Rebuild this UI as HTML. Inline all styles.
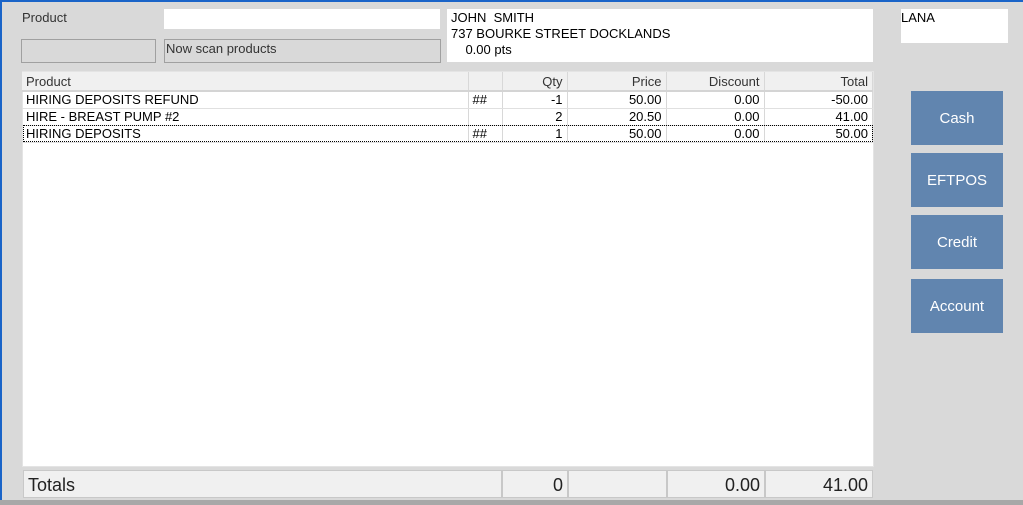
<!DOCTYPE html>
<html><head><style>
*{box-sizing:border-box;margin:0;padding:0}
body{width:1023px;height:505px;background:#d9d9d9;font-family:"Liberation Sans",sans-serif;font-size:13px;color:#000;position:relative;overflow:hidden}
.a{position:absolute}
.topb{left:0;top:0;width:1023px;height:2px;background:#1a64c8}
.leftb{left:0;top:0;width:2px;height:505px;background:#1a64c8}
.bot{left:0;top:500px;width:1023px;height:5px;background:#a8a8a8}
.white{background:#fff}
.gbox{background:#d9d9d9;border:1px solid #a0a0a0}
table{border-collapse:collapse;position:absolute;left:22px;top:72px;width:851px;font-size:13px}
td{height:17px;line-height:15px;padding:0 4px;border-right:1px solid #d8d8d8;border-bottom:1px solid #e0e0e0;text-align:right;white-space:nowrap}
td:first-child{text-align:left}
tr.h td{background:#f0f0f0;color:#333;border-bottom:2px solid #d4d4d4;height:19px}
td.c{text-align:left}
.sel{position:absolute;left:23px;top:125px;width:850px;height:17px;border:1px dotted #000}
.btn{position:absolute;left:911px;width:92px;height:54px;background:#6185af;color:#fff;font-size:15px;display:flex;align-items:center;justify-content:center}
.tot{position:absolute;top:470px;height:28px;background:#f0f0f0;border:1px solid #c8c8c8;font-size:18px;color:#222;padding:4px 4px 0;text-align:right}
</style></head><body>
<div class="a topb"></div><div class="a leftb"></div>
<div class="a" style="left:22px;top:10px;color:#333">Product</div>
<div class="a white" style="left:164px;top:9px;width:276px;height:20px"></div>
<div class="a gbox" style="left:21px;top:39px;width:135px;height:24px"></div>
<div class="a gbox" style="left:164px;top:39px;width:277px;height:24px;color:#333;padding:1px 1px">Now scan products</div>
<div class="a white" style="left:447px;top:9px;width:426px;height:53px;padding:1px 4px;line-height:16px">JOHN&nbsp; SMITH<br>737 BOURKE STREET DOCKLANDS<br>&nbsp;&nbsp;&nbsp; 0.00 pts</div>
<div class="a white" style="left:901px;top:9px;width:107px;height:34px;padding:1px 0">LANA</div>
<div class="a white" style="left:22px;top:71px;width:852px;height:396px;border:1px solid #e4e4e4"></div>
<table>
<tr class="h"><td style="width:446px">Product</td><td style="width:34px"></td><td style="width:65px">Qty</td><td style="width:99px">Price</td><td style="width:98px">Discount</td><td>Total</td></tr>
<tr><td>HIRING DEPOSITS REFUND</td><td class="c">##</td><td>-1</td><td>50.00</td><td>0.00</td><td>-50.00</td></tr>
<tr><td>HIRE - BREAST PUMP #2</td><td></td><td>2</td><td>20.50</td><td>0.00</td><td>41.00</td></tr>
<tr><td>HIRING DEPOSITS</td><td class="c">##</td><td>1</td><td>50.00</td><td>0.00</td><td>50.00</td></tr>
</table>
<div class="sel"></div>
<div class="tot" style="left:23px;width:479px;text-align:left">Totals</div>
<div class="tot" style="left:502px;width:66px">0</div>
<div class="tot" style="left:568px;width:99px"></div>
<div class="tot" style="left:667px;width:98px">0.00</div>
<div class="tot" style="left:765px;width:108px">41.00</div>
<div class="btn" style="top:91px">Cash</div>
<div class="btn" style="top:153px">EFTPOS</div>
<div class="btn" style="top:215px">Credit</div>
<div class="btn" style="top:279px">Account</div>
<div class="a bot"></div>
</body></html>
